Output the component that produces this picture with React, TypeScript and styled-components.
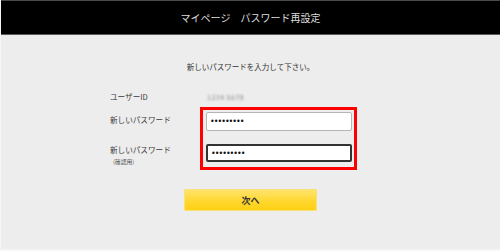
import React from 'react';
import styled, { createGlobalStyle } from 'styled-components';

const GlobalStyle = createGlobalStyle`
  html, body {
    margin: 0;
    padding: 0;
    background: #ededed;
  }
  body {
    width: 500px;
    height: 251px;
    overflow: hidden;
    font-family: "Noto Sans CJK JP", "Noto Sans", sans-serif;
    color: #444;
  }
`;

const Page = styled.div`
  height: 251px;
  box-sizing: border-box;
  border-left: 1px solid #f6f6f6;
  border-bottom: 2px solid #f6f6f6;
  display: flex;
  flex-direction: column;
`;

const Header = styled.header`
  height: 33px;
  background: #000;
  border-top: 1px solid #4a4a4a;
  border-bottom: 1px solid #5a5a5a;
  display: flex;
  align-items: center;
  justify-content: center;
`;

const Title = styled.h1`
  margin: 0;
  font-size: 10px;
  font-weight: 400;
  color: #dedede;
`;

const Message = styled.p`
  margin: 27px 0 0;
  font-size: 7.5px;
  line-height: 10px;
  text-align: center;
  color: #333;
`;

const Form = styled.form`
  margin: 19px 0 0 109px;
  display: grid;
  grid-template-columns: 90px 157px;
  row-gap: 4px;
`;

const Label = styled.div<{ $top?: number }>`
  font-size: 7.6px;
  line-height: 10px;
  color: #3a3a3a;
  margin-top: ${(p) => p.$top ?? 0}px;
`;

const SubLabel = styled.div`
  font-size: 5.8px;
  line-height: 8px;
  color: #555;
  margin: 3px 0 0 3px;
`;

const LabelStack = styled.div`
  display: flex;
  flex-direction: column;
`;

const RowLabel = styled(Label)`
  line-height: 12px;
`;

const MaskedValue = styled.div`
  font-size: 7px;
  line-height: 12px;
  color: #8a8a8a;
  padding-left: 7px;
  filter: blur(0.8px);
  letter-spacing: 0.5px;
`;

const Highlight = styled.div`
  border: 3px solid #f00;
  padding: 2px 2px 5px 3px;
  display: flex;
  flex-direction: column;
  gap: 13px;
`;

const PasswordInput = styled.input<{ $focused?: boolean }>`
  box-sizing: border-box;
  width: 146px;
  height: ${(p) => (p.$focused ? 18 : 19)}px;
  margin: 0;
  padding: 0 0 0 3px;
  background: #fff;
  border: ${(p) => (p.$focused ? '2px solid #333' : '1px solid #b5b5b5')};
  border-radius: 2px;
  font-family: "DejaVu Sans", sans-serif;
  font-size: 8px;
  letter-spacing: -1px;
  color: #111;
  outline: none;
`;

const Actions = styled.div`
  margin-top: 19px;
  display: flex;
  justify-content: center;
`;

const NextButton = styled.button`
  width: 133px;
  height: 22px;
  box-sizing: border-box;
  border: 1px solid #f7e27a;
  border-radius: 1px;
  background: linear-gradient(to bottom, #ffe46c 0%, #ffd62a 60%, #ffd015 100%);
  font-family: "Noto Sans CJK JP", sans-serif;
  font-size: 9px;
  font-weight: 700;
  color: #333;
  padding: 0;
  cursor: pointer;
`;

export default function App() {
  return (
    <>
      <GlobalStyle />
      <Page>
        <Header>
          <Title>マイページ　パスワード再設定</Title>
        </Header>
        <Message>新しいパスワードを入力して下さい。</Message>
        <Form onSubmit={(e) => e.preventDefault()}>
          <RowLabel>ユーザーID</RowLabel>
          <MaskedValue>1234 5678</MaskedValue>
          <LabelStack>
            <Label $top={8}>新しいパスワード</Label>
            <Label $top={20}>新しいパスワード</Label>
            <SubLabel>(確認用)</SubLabel>
          </LabelStack>
          <Highlight>
            <PasswordInput type="password" defaultValue="aaaaaaaaa" readOnly />
            <PasswordInput type="password" defaultValue="aaaaaaaaa" readOnly $focused />
          </Highlight>
        </Form>
        <Actions>
          <NextButton type="button">次へ</NextButton>
        </Actions>
      </Page>
    </>
  );
}
